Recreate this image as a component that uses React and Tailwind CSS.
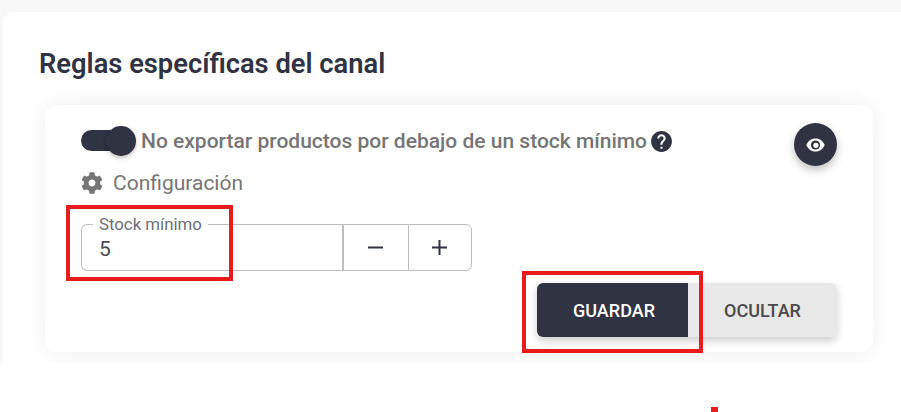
import React from "react";
import { FaCog } from "react-icons/fa";
import { MdHelp } from "react-icons/md";

export default function App() {
  return (
    <div className="relative h-[412px] w-[901px] overflow-hidden bg-white font-['Roboto',sans-serif]">
      <div className="h-[363px] overflow-hidden bg-[#f8f8f8] pl-[3px] pt-3">
        <div className="h-[400px] rounded-tl-xl bg-white pl-[36px] pr-7 pt-[35px]">
          <h2 className="m-0 text-[27.3px] leading-[35px] font-semibold text-[#2f3342]">Reglas específicas del canal</h2>
          <div className="relative mt-[23px] ml-[6px] h-[247px] w-[828px] rounded-xl bg-white pl-9 pt-5 shadow-[0_0_24px_rgba(0,0,0,0.07)]">
            <div className="flex h-[30px] items-center">
              <div className="relative h-[21px] w-[55px] shrink-0">
                <div className="h-[21px] w-[40px] rounded-full bg-[#2f3342]"></div>
                <div className="absolute left-[25px] top-[-4px] h-[30px] w-[30px] rounded-full bg-[#2f3342] shadow-[0_2px_4px_rgba(0,0,0,0.25)]"></div>
              </div>
              <span className="ml-[5px] mt-[3px] text-[21px] font-medium text-[#757575]">No exportar productos por debajo de un stock mínimo</span>
              <MdHelp className="ml-[2px] mt-[3px] text-[25px] text-[#2f3342]" />
            </div>
            <div className="mt-[14px] flex h-[28px] items-center">
              <FaCog className="text-[22px] text-[#757575]" />
              <span className="ml-[10px] mt-[1px] text-[21px] text-[#757575]">Configuración</span>
            </div>
            <div className="mt-[18px] flex h-[56px] w-[391px] items-end">
              <fieldset className="m-0 flex h-[56px] w-[264px] flex-col rounded-l-md border border-r-2 border-[#bdbdbd] pl-[11px]">
                <legend className="ml-0 px-[6px] text-[16.8px] leading-[18px] text-[#6b6f7a]">Stock mínimo</legend>
                <span className="pl-[6px] pt-[2px] text-[21px] leading-[28px] text-[#4a4a4a]">5</span>
              </fieldset>
              <button className="flex h-[47px] w-[64px] items-center justify-center border-y border-[#bdbdbd] pr-[2px] text-[#2f3342]">
                <svg width="15" height="15" viewBox="0 0 15 15"><path d="M0 7.5h15" stroke="currentColor" strokeWidth="2" /></svg>
              </button>
              <button className="flex h-[47px] w-[64px] items-center justify-center rounded-r-md border border-[#bdbdbd] pr-[2px] text-[#2f3342]">
                <svg width="15" height="15" viewBox="0 0 15 15"><path d="M0 7.5h15M7.5 0v15" stroke="currentColor" strokeWidth="2" /></svg>
              </button>
            </div>
            <button className="absolute right-[36px] top-[18px] flex h-[43px] w-[43px] items-center justify-center rounded-full bg-[#2f3342] shadow-[0_4px_8px_rgba(0,0,0,0.25)]">
              <svg width="19" height="14" viewBox="0 0 19 14">
                <path d="M9.5 0.5C5.2 0.5 1.8 3.2 0.3 7c1.5 3.8 4.9 6.5 9.2 6.5s7.7-2.7 9.2-6.5C17.2 3.2 13.8 0.5 9.5 0.5z" fill="#ffffff" />
                <circle cx="9.5" cy="7" r="4.6" fill="#2f3342" />
                <circle cx="9.9" cy="7.3" r="2.6" fill="#ffffff" />
              </svg>
            </button>
            <div className="absolute bottom-[15px] right-[36px] flex h-[54px] rounded-md shadow-[0_4px_8px_rgba(0,0,0,0.2)]">
              <button className="w-[151px] rounded-l-md bg-[#2f3342] pl-[3px] text-[18px] font-medium text-white">GUARDAR</button>
              <button className="w-[149px] rounded-r-md bg-[#e8e8e8] text-[18px] font-medium text-[#4a4a4a]">OCULTAR</button>
            </div>
          </div>
        </div>
      </div>
      <div className="absolute left-[66px] top-[205px] h-[76px] w-[167px] border-4 border-[#e81c1c]"></div>
      <div className="absolute left-[522px] top-[271px] h-[82px] w-[181px] border-4 border-[#e81c1c]"></div>
      <div className="absolute left-[711px] top-[407px] h-[5px] w-[7px] bg-[#e81c1c]"></div>
    </div>
  );
}
